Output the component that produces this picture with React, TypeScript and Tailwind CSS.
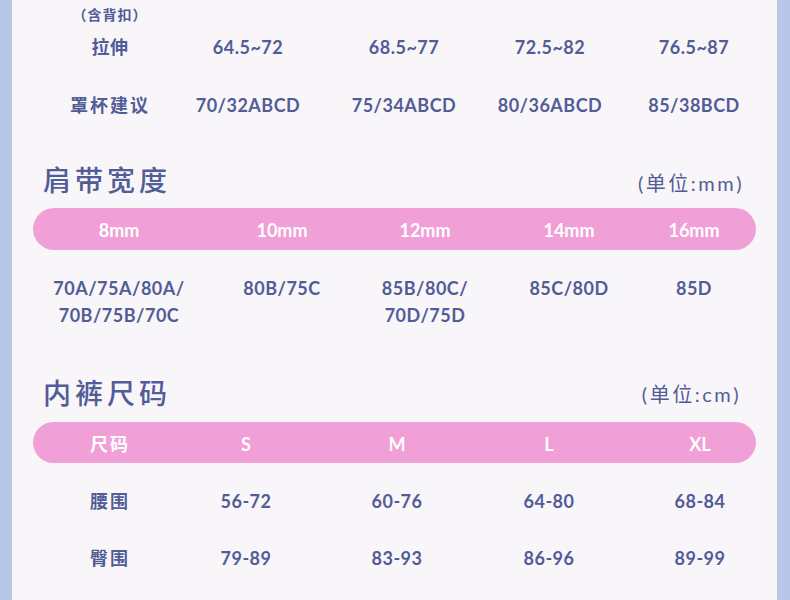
import React from "react";

const TXT = "text-[#525c97]";

function Cells({ cols, items, className }: { cols: string; items: React.ReactNode[]; className: string }) {
  return (
    <div className={`grid ${cols} ${className}`}>
      {items.map((it, i) => (
        <div key={i} className="text-center whitespace-nowrap">
          {it}
        </div>
      ))}
    </div>
  );
}

const BRA = "grid-cols-[134px_142px_170px_122px_166px] ml-[10px]";
const SHOULDER = "grid-cols-[172px_154px_132px_156px_94px]";
const PANTY = "grid-cols-[134px_138px_164px_140px_162px] ml-[10px]";

export default function App() {
  return (
    <div
      className="w-[790px] h-[600px] flex overflow-hidden"
      style={{ fontFamily: '"Lato", "Noto Sans CJK SC", sans-serif' }}
    >
      <div className="w-[12px] shrink-0 bg-[#b8c6e8]" />
      <div className="w-[765px] min-w-0 shrink-0 overflow-hidden bg-[#f9f6f9] px-[21px] flex flex-col">
        {/* bra size table tail */}
        <Cells
          cols={BRA}
          className={`h-[28px] items-center ${TXT} text-[14px] font-bold tracking-[1px]`}
          items={["（含背扣）", "", "", "", ""]}
        />
        <Cells
          cols={BRA}
          className={`h-[38px] items-center ${TXT} text-[18px] font-bold tracking-[0.5px]`}
          items={["拉伸", "64.5~72", "68.5~77", "72.5~82", "76.5~87"]}
        />
        <Cells
          cols={BRA}
          className={`h-[78px] items-center ${TXT} text-[18px] font-bold tracking-[0.5px]`}
          items={[<span className="tracking-[2px]">罩杯建议</span>, "70/32ABCD", "75/34ABCD", "80/36ABCD", "85/38BCD"]}
        />

        {/* shoulder strap */}
        <div className={`mt-[16px] h-[40px] flex items-center justify-between pl-[10px] pr-[12px] ${TXT}`}>
          <span className="text-[28px] font-medium tracking-[4px] leading-none">肩带宽度</span>
          <span className="text-[20px] tracking-[2.5px] leading-none mt-[6px]">(单位:mm)</span>
        </div>
        <div className="mt-[8px] h-[42px] rounded-full bg-[#f0a0d6]">
          <Cells
            cols={SHOULDER}
            className="h-full items-center text-white text-[18px] font-bold pt-[3px]"
            items={["8mm", "10mm", "12mm", "14mm", "16mm"]}
          />
        </div>
        <Cells
          cols={SHOULDER}
          className={`mt-[25px] items-start ${TXT} text-[18px] font-bold leading-[27px] tracking-[0.5px]`}
          items={[
            <>70A/75A/80A/<br />70B/75B/70C</>,
            "80B/75C",
            <>85B/80C/<br />70D/75D</>,
            "85C/80D",
            "85D",
          ]}
        />

        {/* panties */}
        <div className={`mt-[44px] h-[40px] flex items-center justify-between pl-[10px] pr-[15px] ${TXT}`}>
          <span className="text-[28px] font-medium tracking-[4px] leading-none">内裤尺码</span>
          <span className="text-[20px] tracking-[2.5px] leading-none mt-[2px]">(单位:cm)</span>
        </div>
        <div className="mt-[9px] h-[41px] rounded-full bg-[#f0a0d6]">
          <Cells
            cols={PANTY}
            className="h-full items-center text-white text-[18px] font-bold pt-[3px]"
            items={[<span className="tracking-[2px]">尺码</span>, "S", "M", "L", "XL"]}
          />
        </div>
        <Cells
          cols={PANTY}
          className={`mt-[10px] h-[57px] items-center ${TXT} text-[18px] font-bold tracking-[0.5px]`}
          items={[<span className="tracking-[2px]">腰围</span>, "56-72", "60-76", "64-80", "68-84"]}
        />
        <Cells
          cols={PANTY}
          className={`h-[57px] items-center ${TXT} text-[18px] font-bold tracking-[0.5px]`}
          items={[<span className="tracking-[2px]">臀围</span>, "79-89", "83-93", "86-96", "89-99"]}
        />
      </div>
      <div className="w-[13px] shrink-0 bg-[#b8c6e8]" />
    </div>
  );
}
